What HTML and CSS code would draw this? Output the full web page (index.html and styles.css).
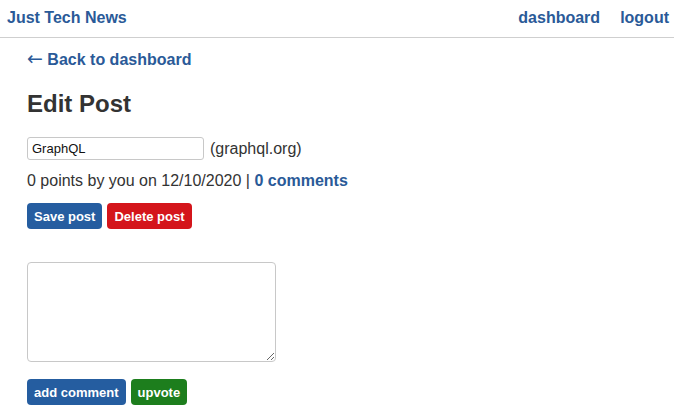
FILE: index.html
```html
<!DOCTYPE html>
<html>
<head>
<meta charset="utf-8">
<link rel="stylesheet" href="styles.css">
</head>
<body>
<header class="topbar">
  <a class="brand" href="#">Just Tech News</a>
  <nav class="nav">
    <a href="#">dashboard</a>
    <a href="#">logout</a>
  </nav>
</header>
<main class="main">
  <a class="back" href="#"><span class="arrow">←</span> Back to dashboard</a>
  <h2 class="title">Edit Post</h2>
  <div class="post-row">
    <input class="title-input" type="text" value="GraphQL">
    <span class="domain">(graphql.org)</span>
  </div>
  <div class="meta">0 points by you on 12/10/2020 | <a href="#">0 comments</a></div>
  <div class="actions">
    <button class="btn btn-blue">Save post</button>
    <button class="btn btn-red">Delete post</button>
  </div>
  <textarea class="comment"></textarea>
  <div class="actions">
    <button class="btn btn-blue">add comment</button>
    <button class="btn btn-green">upvote</button>
  </div>
</main>
</body>
</html>
```
FILE: styles.css
```css
* { box-sizing: border-box; }
body {
  margin: 0;
  font-family: "Liberation Sans", Arial, sans-serif;
  color: #333;
  background: #fff;
}
a { color: #2a5a98; text-decoration: none; font-weight: bold; }
.topbar {
  display: flex;
  justify-content: space-between;
  align-items: center;
  height: 38px;
  padding: 0 5px 2px 7px;
  border-bottom: 1px solid #cfcfcf;
  font-size: 16px;
}
.nav { display: flex; gap: 20px; }
.main { padding: 13px 27px 0; }
.back { display: inline-block; font-size: 16px; line-height: 18px; }
.arrow {
  font-family: "DejaVu Sans", sans-serif;
  font-weight: normal;
  font-size: 19px;
  line-height: 0;
}
.title {
  font-size: 24px;
  margin: 21px 0 0;
  line-height: 28px;
  color: #333;
}
.post-row {
  display: flex;
  align-items: center;
  gap: 6px;
  margin-top: 19px;
  font-size: 16px;
}
.title-input {
  width: 177px;
  height: 23px;
  border: 1px solid #c8c8c8;
  border-radius: 3px;
  padding: 1px 4px;
  font-family: "Liberation Sans", Arial, sans-serif;
  font-size: 13px;
  color: #111;
}
.meta { margin-top: 11px; font-size: 16px; line-height: 20px; }
.actions { display: flex; gap: 5px; margin-top: 12px; }
.btn {
  border: none;
  border-radius: 4px;
  color: #fff;
  font-family: "Liberation Sans", Arial, sans-serif;
  font-weight: bold;
  font-size: 13px;
  height: 26px;
  padding: 0 7px;
}
.btn-blue { background: #255da0; }
.btn-red { background: #d4151b; }
.btn-green { background: #1d7e1d; }
.comment {
  display: block;
  width: 249px;
  height: 100px;
  margin-top: 33px;
  border: 1px solid #c8c8c8;
  border-radius: 4px;
  resize: both;
}
.comment + .actions { margin-top: 17px; }
```
